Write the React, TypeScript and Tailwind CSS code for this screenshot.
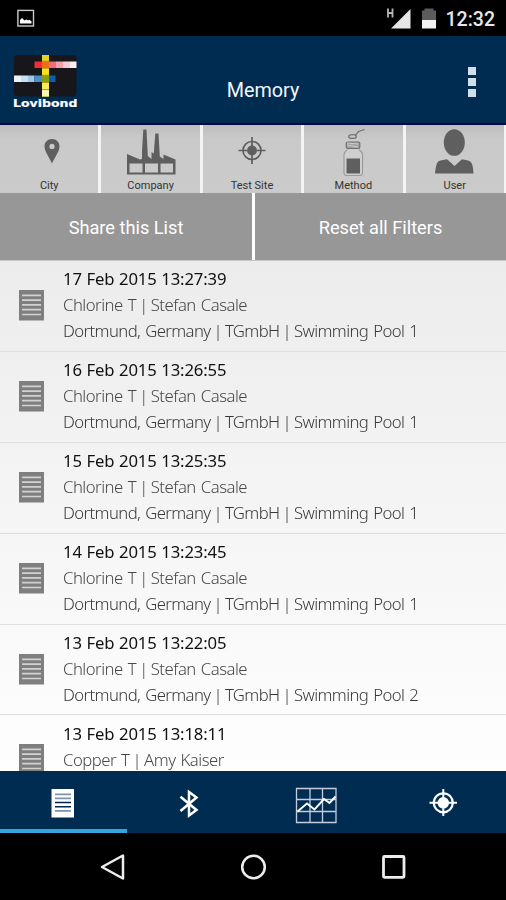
import React, { Fragment, useState } from "react";

interface MemoryEntry {
  date: string;
  method: string[];
  location?: string[];
}

const entries: MemoryEntry[] = [
  { date: "17 Feb 2015 13:27:39", method: ["Chlorine T", "Stefan Casale"], location: ["Dortmund, Germany", "TGmbH", "Swimming Pool 1"] },
  { date: "16 Feb 2015 13:26:55", method: ["Chlorine T", "Stefan Casale"], location: ["Dortmund, Germany", "TGmbH", "Swimming Pool 1"] },
  { date: "15 Feb 2015 13:25:35", method: ["Chlorine T", "Stefan Casale"], location: ["Dortmund, Germany", "TGmbH", "Swimming Pool 1"] },
  { date: "14 Feb 2015 13:23:45", method: ["Chlorine T", "Stefan Casale"], location: ["Dortmund, Germany", "TGmbH", "Swimming Pool 1"] },
  { date: "13 Feb 2015 13:22:05", method: ["Chlorine T", "Stefan Casale"], location: ["Dortmund, Germany", "TGmbH", "Swimming Pool 2"] },
  { date: "13 Feb 2015 13:18:11", method: ["Copper T", "Amy Kaiser"] },
];

const StatusBar = () => (
  <div className="flex h-9 shrink-0 items-center bg-black pl-4 pr-[11px]">
    <svg width="18" height="18" viewBox="0 0 18 18" className="ml-px">
      <rect x="0.9" y="1.4" width="15.6" height="15.6" fill="none" stroke="#c9c9c9" strokeWidth="1.4" />
      <path d="M3 14.500V11L5 9L7.500 11.500L9.500 10.500L11 11.500L12.500 10.800L14.500 12.500V14.500Z" fill="#fff" />
    </svg>
    <svg width="52" height="22" viewBox="0 0 52 22" className="ml-auto">
      <path d="M2 1.500V10.500M6.500 1.500V10.500M2 6H6.500" stroke="#b5b5b5" strokeWidth="1.800" fill="none" />
      <path d="M5 21.500L24.500 2V21.500Z" fill="#e6e6e6" />
      <path d="M36 3.500H38.500V1.500H47.500V3.500H50V13H36Z" fill="#5c5c5c" />
      <rect x="36" y="13" width="14" height="8.500" fill="#f2f2f2" />
    </svg>
    <span className="ml-[8px] mt-[4px] text-[19.5px] font-medium leading-6 text-[#e8e8e8]">12:32</span>
  </div>
);

// Colour bars crossing on a black tile, brand name below
const Logo = () => (
  <svg width="66" height="56" viewBox="0 0 66 56">
    <rect x="2" y="1" width="62.500" height="41.500" rx="4" fill="#17171b" />
    <rect x="30" y="1" width="7" height="41.500" fill="#f5e21c" />
    <rect x="30" y="1" width="7" height="6" fill="#e8d024" />
    <rect x="30" y="29" width="7" height="6.500" fill="#f6ec62" />
    <rect x="30" y="36" width="7" height="6.500" fill="#fcf6b4" />
    <rect x="22.500" y="7.500" width="7.500" height="6.500" fill="#ee2f36" />
    <rect x="30" y="7.500" width="7" height="6.500" fill="#f26a1c" />
    <rect x="37" y="7.500" width="7" height="6.500" fill="#ee6d78" />
    <rect x="44" y="7.500" width="7" height="6.500" fill="#f0a0aa" />
    <rect x="51" y="7.500" width="7" height="6.500" fill="#f5ccd3" />
    <rect x="58" y="7.500" width="6.500" height="6.500" fill="#fcf0f2" />
    <rect x="2" y="21.500" width="7" height="6.500" fill="#eaf3fa" />
    <rect x="9" y="21.500" width="7" height="6.500" fill="#c8dff1" />
    <rect x="16" y="21.500" width="6.500" height="6.500" fill="#9fc7e6" />
    <rect x="22.500" y="21.500" width="7.500" height="6.500" fill="#4a90cc" />
    <rect x="30" y="21.500" width="7" height="6.500" fill="#8d9e10" />
    <rect x="37" y="21.500" width="6.500" height="6.500" fill="#0c5fac" />
    <path d="M30 7.200H37M30 14.200H37M30 21.300H37M30 28.500H37M30 35.600H37" stroke="#8a7c10" strokeWidth="0.700" />
    <text
      x="1"
      y="52.500"
      textLength="64.500"
      lengthAdjust="spacingAndGlyphs"
      fontSize="10.300"
      fontWeight="700"
      fontFamily="DejaVu Sans, sans-serif"
      fill="#fff"
      stroke="#fff"
      strokeWidth="0.200"
    >
      Lovibond
    </text>
  </svg>
);

const Header = () => (
  <header className="grid h-[89px] shrink-0 grid-cols-3 items-center border-b-2 border-[#00074a] bg-[#002c52] pl-3 pr-[30px]">
    <div className="pt-[4px]">
      <Logo />
    </div>
    <h1 className="-mr-[38px] mt-[23px] text-center text-[19.8px] leading-6 text-[#f4f6f8]">Memory</h1>
    <button aria-label="More" className="mt-1 flex flex-col gap-[3px] justify-self-end">
      <span className="h-2 w-2 bg-[#d3deed]" />
      <span className="h-2 w-2 bg-[#d3deed]" />
      <span className="h-2 w-2 bg-[#d3deed]" />
    </button>
  </header>
);

const CityIcon = () => (
  <svg width="98" height="54" viewBox="0 0 98 54" fill="#5f5f5f">
    <path
      fillRule="evenodd"
      d="M52 14C47.500 14 44.500 17.300 44.500 21.500C44.500 26 49 32 52 38.500C55 32 59.500 26 59.500 21.500C59.500 17.300 56.500 14 52 14ZM52 18.800A2.600 2.600 0 1 1 52 24A2.600 2.600 0 1 1 52 18.800Z"
    />
  </svg>
);

const CompanyIcon = () => (
  <svg width="98" height="54" viewBox="0 0 98 54" fill="#5f5f5f">
    <path
      fillRule="evenodd"
      d="M25 49.500V29L38 34.500L40 34V26L41.300 4.500H44.500L45.800 31L49.500 34V27L51.800 28.500L53.300 8.500H56.500L57.800 31.500L61.500 34V29.500L73.500 34.500V49.500ZM27.500 38.500V47.500H40.500V38.500ZM43 38.500V47.500H56V38.500ZM58.500 38.500V47.500H71V38.500Z"
    />
  </svg>
);

const TestSiteIcon = () => (
  <svg width="98" height="54" viewBox="0 0 98 54" fill="none" stroke="#5f5f5f">
    <circle cx="49" cy="25.500" r="9" strokeWidth="1.700" />
    <circle cx="49" cy="25.500" r="5" fill="#5f5f5f" stroke="none" />
    <path d="M49 12V21M49 30V39M35.500 25.500H44M54 25.500H62.500" strokeWidth="1.700" />
  </svg>
);

const MethodIcon = () => (
  <svg width="98" height="54" viewBox="0 0 98 54" fill="none" stroke="#707070">
    <ellipse cx="48.500" cy="11.500" rx="3.800" ry="1.900" strokeWidth="1.300" />
    <path d="M51.500 10L54.500 6.500L60.500 4.500" strokeWidth="1.200" />
    <rect x="42.300" y="17" width="13.500" height="6.500" rx="1.500" fill="#a2a2a2" strokeWidth="1.200" />
    <path d="M43 20L54 22M43 18L54 19" stroke="#d5d5d5" strokeWidth="0.800" />
    <path
      d="M43.500 24.500C42 26.500 40 26.500 40 29.500V48C40 49.700 41 50.500 42.500 50.500H56C57.500 50.500 58.500 49.700 58.500 48V29.500C58.500 26.500 56.500 26.500 55 24.500"
      fill="#cfcfcf"
      stroke="#999"
      strokeWidth="1.100"
    />
    <path d="M42.500 33.500H56V48.500H42.500Z" fill="#5f5f5f" stroke="none" />
  </svg>
);

const UserIcon = () => (
  <svg width="98" height="54" viewBox="0 0 98 54" fill="#5f5f5f">
    <ellipse cx="48.300" cy="17.500" rx="10.500" ry="13.300" />
    <path d="M29 48.500C30 40 30.500 36.500 34.500 35.500L41 34.300L48.500 41L56 34.300L62 35.500C66 36.500 67 40 67.500 48.500Z" />
  </svg>
);

const filters = [
  { label: "City", icon: <CityIcon /> },
  { label: "Company", icon: <CompanyIcon /> },
  { label: "Test Site", icon: <TestSiteIcon /> },
  { label: "Method", icon: <MethodIcon /> },
  { label: "User", icon: <UserIcon /> },
];

const FilterBar = () => (
  <div className="flex h-[68px] shrink-0 gap-[3px] bg-[#f4f4f4]">
    {filters.map((filter) => (
      <button
        key={filter.label}
        className="flex h-full w-[98.4px] shrink-0 flex-col items-center bg-linear-to-b from-[#bdbdbd] via-[#c9c9c9] via-20% to-[#cbcbcb]"
      >
        {filter.icon}
        <span className="w-full text-center text-[11px] leading-[14px] text-[#333]">{filter.label}</span>
      </button>
    ))}
  </div>
);

const DocumentIcon = () => (
  <svg width="26" height="32" viewBox="0 0 26 32">
    <rect x="0" y="0" width="25" height="30.500" fill="#7f7f7f" />
    <path d="M3 5.300H22M3 10.100H22M3 14.900H22M3 19.700H22M3 24.500H22" stroke="#d2d2d2" strokeWidth="1.700" />
  </svg>
);

// Joins the parts with a tight vertical bar
const PipedText = ({ parts }: { parts: string[] }) => (
  <>
    {parts.map((part, index) => (
      <Fragment key={part}>
        {index > 0 && <span className="[word-spacing:-0.8px]"> | </span>}
        {part}
      </Fragment>
    ))}
  </>
);

const EntryRow = ({ entry }: { entry: MemoryEntry }) => (
  <li className="flex h-[90.9px] shrink-0 border-b border-[#dedede] pl-[19px]">
    <div className="w-11 shrink-0 pt-[29px]">
      <DocumentIcon />
    </div>
    <div className="whitespace-nowrap pt-[5.4px] font-['Noto_Sans',sans-serif] text-[16.7px] leading-[25.8px]">
      <p className="tracking-[-0.15px] text-[#111] [word-spacing:0.5px]">{entry.date}</p>
      <p className="font-light tracking-[-0.5px] text-[#484848] [word-spacing:1.2px]">
        <PipedText parts={entry.method} />
      </p>
      {entry.location && (
        <p className="font-light tracking-[-0.59px] text-[#383838] [word-spacing:1.2px]">
          <PipedText parts={entry.location} />
        </p>
      )}
    </div>
  </li>
);

const tabs = [
  {
    name: "Memory",
    icon: (
      <svg width="42" height="40" viewBox="0 0 42 40">
        <rect x="9.500" y="5" width="22.500" height="28.500" fill="#fff" />
        <path d="M13 10.300H29M13 14.300H29M13 26.800H29" stroke="#7e93a5" strokeWidth="1.800" />
        <path d="M13 18.500H29M13 22.700H29" stroke="#002350" strokeWidth="1.600" />
      </svg>
    ),
  },
  {
    name: "Bluetooth",
    icon: (
      <svg width="42" height="40" viewBox="0 0 42 40">
        <path d="M11.500 12.800L27.500 26L20 31.500V8L27.500 13.500L11.500 27" fill="none" stroke="#fff" strokeWidth="2.500" />
      </svg>
    ),
  },
  {
    name: "Chart",
    icon: (
      <svg width="42" height="40" viewBox="0 0 42 40" fill="none">
        <path d="M1.500 4.500H41V38.500H1.500ZM15 4.500V38.500M27.500 4.500V38.500M1.500 15.500H41M1.500 27.500H41" stroke="#c3cdde" strokeWidth="1.300" />
        <path d="M2.500 27.500L12 19.500L19.500 25.500L29 15L34.500 19L40.500 12.500" stroke="#fff" strokeWidth="1.900" />
      </svg>
    ),
  },
  {
    name: "Test site",
    icon: (
      <svg width="42" height="40" viewBox="0 0 42 40" fill="none" stroke="#fff">
        <circle cx="21.300" cy="18.800" r="9.500" strokeWidth="2.200" />
        <circle cx="21.300" cy="18.800" r="5.800" fill="#fff" stroke="none" />
        <path d="M21.300 5V32M7.500 18.800H35" strokeWidth="2" />
      </svg>
    ),
  },
];

const TabBar = () => {
  const [active, setActive] = useState<number>(0);

  return (
    <nav className="flex h-[62px] shrink-0 bg-[#002c52]">
      {tabs.map((tab, index) => (
        <button
          key={tab.name}
          aria-label={tab.name}
          onClick={() => setActive(index)}
          className={`flex flex-1 justify-center border-b-4 pt-[13px] ${
            index === active ? "border-[#35a4dc]" : "border-transparent"
          }`}
        >
          {tab.icon}
        </button>
      ))}
    </nav>
  );
};

const NavigationBar = () => (
  <div className="flex h-[67px] shrink-0 items-center justify-center gap-[112px] bg-black">
    <svg width="28" height="28" viewBox="0 0 28 28" fill="none" stroke="#ededed" strokeWidth="2.500">
      <path d="M3 14L24 2.500V25.500Z" strokeLinejoin="round" />
    </svg>
    <svg width="28" height="28" viewBox="0 0 28 28" fill="none" stroke="#ededed" strokeWidth="2.500">
      <circle cx="14.500" cy="14" r="11.300" />
    </svg>
    <svg width="28" height="28" viewBox="0 0 28 28" fill="none" stroke="#ededed" strokeWidth="2.800">
      <rect x="4.500" y="3.500" width="20.500" height="20.800" rx="1" />
    </svg>
  </div>
);

const App = () => {
  return (
    <div className="flex h-[900px] w-[506px] flex-col overflow-hidden bg-black font-[Roboto,sans-serif]">
      <StatusBar />
      <Header />
      <FilterBar />
      <div className="flex h-[67px] shrink-0 gap-[3px] bg-white text-[18.2px] text-white">
        <button className="w-[252px] bg-[#979797] pt-[3px]">Share this List</button>
        <button className="flex-1 bg-[#979797] pt-[3px]">Reset all Filters</button>
      </div>
      <ul className="flex min-h-0 flex-1 flex-col overflow-hidden border-t border-[#c6c6c6] bg-linear-to-b from-[#ececec] to-[#fefefe] will-change-transform">
        {entries.map((entry) => (
          <EntryRow key={entry.date} entry={entry} />
        ))}
      </ul>
      <TabBar />
      <NavigationBar />
    </div>
  );
};

export default App;
